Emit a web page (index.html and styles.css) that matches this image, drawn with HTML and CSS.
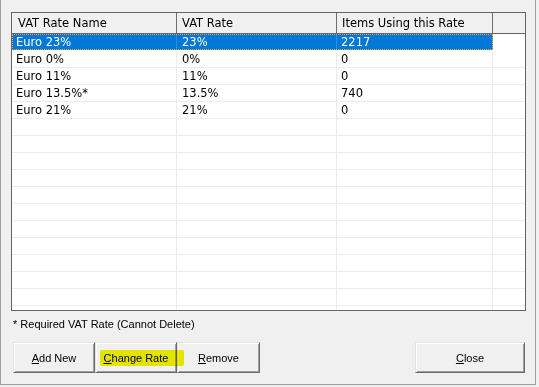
FILE: index.html
```html
<!DOCTYPE html>
<html lang="en">
<head>
    <meta charset="UTF-8">
    <title>VAT Rates</title>
    <link rel="stylesheet" href="styles.css">
</head>
<body>
    <div class="dialog">
        <div class="grid">
            <div class="grid-head">
                <div class="hcell c1">VAT Rate Name</div>
                <div class="hcell c2">VAT Rate</div>
                <div class="hcell c3">Items Using this Rate</div>
                <div class="hcell c4"></div>
            </div>
            <div class="grid-body">
                <div class="row sel">
                    <div class="cells">
                        <div class="cell c1">Euro 23%</div>
                        <div class="cell c2">23%</div>
                        <div class="cell c3">2217</div>
                    </div>
                    <div class="cell c4"></div>
                </div>
                <div class="row">
                    <div class="cells">
                        <div class="cell c1">Euro 0%</div>
                        <div class="cell c2">0%</div>
                        <div class="cell c3">0</div>
                    </div>
                    <div class="cell c4"></div>
                </div>
                <div class="row">
                    <div class="cells">
                        <div class="cell c1">Euro 11%</div>
                        <div class="cell c2">11%</div>
                        <div class="cell c3">0</div>
                    </div>
                    <div class="cell c4"></div>
                </div>
                <div class="row">
                    <div class="cells">
                        <div class="cell c1">Euro 13.5%*</div>
                        <div class="cell c2">13.5%</div>
                        <div class="cell c3">740</div>
                    </div>
                    <div class="cell c4"></div>
                </div>
                <div class="row">
                    <div class="cells">
                        <div class="cell c1">Euro 21%</div>
                        <div class="cell c2">21%</div>
                        <div class="cell c3">0</div>
                    </div>
                    <div class="cell c4"></div>
                </div>
                <div class="row"><div class="cells"><div class="cell c1"></div><div class="cell c2"></div><div class="cell c3"></div></div><div class="cell c4"></div></div>
                <div class="row"><div class="cells"><div class="cell c1"></div><div class="cell c2"></div><div class="cell c3"></div></div><div class="cell c4"></div></div>
                <div class="row"><div class="cells"><div class="cell c1"></div><div class="cell c2"></div><div class="cell c3"></div></div><div class="cell c4"></div></div>
                <div class="row"><div class="cells"><div class="cell c1"></div><div class="cell c2"></div><div class="cell c3"></div></div><div class="cell c4"></div></div>
                <div class="row"><div class="cells"><div class="cell c1"></div><div class="cell c2"></div><div class="cell c3"></div></div><div class="cell c4"></div></div>
                <div class="row"><div class="cells"><div class="cell c1"></div><div class="cell c2"></div><div class="cell c3"></div></div><div class="cell c4"></div></div>
                <div class="row"><div class="cells"><div class="cell c1"></div><div class="cell c2"></div><div class="cell c3"></div></div><div class="cell c4"></div></div>
                <div class="row"><div class="cells"><div class="cell c1"></div><div class="cell c2"></div><div class="cell c3"></div></div><div class="cell c4"></div></div>
                <div class="row"><div class="cells"><div class="cell c1"></div><div class="cell c2"></div><div class="cell c3"></div></div><div class="cell c4"></div></div>
                <div class="row"><div class="cells"><div class="cell c1"></div><div class="cell c2"></div><div class="cell c3"></div></div><div class="cell c4"></div></div>
                <div class="row"><div class="cells"><div class="cell c1"></div><div class="cell c2"></div><div class="cell c3"></div></div><div class="cell c4"></div></div>
                <div class="row"><div class="cells"><div class="cell c1"></div><div class="cell c2"></div><div class="cell c3"></div></div><div class="cell c4"></div></div>
            </div>
        </div>

        <p class="note">* Required VAT Rate (Cannot Delete)</p>

        <div class="buttons">
            <button class="btn btn-add"><u>A</u>dd New</button>
            <button class="btn btn-change"><span class="marker"></span><u>C</u>hange Rate</button>
            <button class="btn btn-remove"><u>R</u>emove</button>
            <button class="btn btn-close"><u>C</u>lose</button>
        </div>
    </div>
</body>
</html>
```

FILE: styles.css
```css
body {
    margin: 0;
    background-color: #f0f0f0;
    font-family: "DejaVu Sans", sans-serif;
    color: #000;
}

.dialog {
    width: 536px;
    height: 385px;
    box-sizing: border-box;
    padding: 12px 0 0 10px;
    border-left: 1px solid #a0a0a0;
    border-right: 1px solid #a0a0a0;
    border-bottom: 1px solid #a0a0a0;
}

/* data grid */
.grid {
    width: 515px;
    height: 299px;
    box-sizing: border-box;
    border: 1px solid #646464;
    background-color: #fff;
    overflow: hidden;
}

.grid-head {
    display: flex;
    height: 21px;
    box-sizing: border-box;
    border-bottom: 1px solid #646464;
    background-color: #f0f0f0;
}

.hcell {
    box-sizing: border-box;
    padding-left: 6px;
    font-size: 11.5px;
    line-height: 20px;
    white-space: nowrap;
    overflow: hidden;
    border-right: 1px solid #6e6e6e;
}

.hcell.c2, .hcell.c3 {
    padding-left: 5px;
}

.hcell.c4 {
    border-right: none;
}

.c1 { width: 165px; }
.c2 { width: 160px; }
.c3 { width: 156px; }
.c4 { width: 32px; }

.grid-body {
    height: 276px;
    overflow: hidden;
}

.row {
    display: flex;
    height: 17px;
    box-sizing: border-box;
    border-bottom: 1px solid #ebebeb;
}

.cells {
    display: flex;
}

.cell {
    box-sizing: border-box;
    padding-left: 4px;
    font-size: 11.5px;
    line-height: 16px;
    white-space: nowrap;
    overflow: hidden;
    border-right: 1px solid #ebebeb;
}

.cell.c2 {
    padding-left: 5px;
}

.cell.c4 {
    border-right: none;
}

.row.sel {
    border-bottom-color: #fff;
}

.row.sel .cells {
    background-color: #0078d7;
    color: #fff;
    outline: 1px dotted #f0a040;
    outline-offset: -1px;
}

.row.sel .cells .cell {
    border-right-color: #2b8ee0;
}

/* footer */
.note {
    margin: 6px 0 0 2px;
    font-family: "Liberation Sans", Arial, sans-serif;
    font-size: 11px;
    line-height: 14px;
}

.buttons {
    display: flex;
    width: 515px;
    box-sizing: border-box;
    padding: 0 1px 0 2px;
    margin-top: 11px;
}

.btn {
    height: 31px;
    box-sizing: border-box;
    padding: 0;
    font-family: "Liberation Sans", Arial, sans-serif;
    font-size: 11px;
    color: #000;
    background-color: #f0f0f0;
    border: 1px solid;
    border-color: #e3e3e3 #696969 #696969 #e3e3e3;
    box-shadow: inset 1px 1px #fff, inset -1px -1px #a0a0a0;
}

.btn-add { width: 82px; }
.btn-change { width: 82px; position: relative; }
.btn-remove { width: 83px; }
.btn-close { width: 110px; margin-left: auto; }

.btn-change .marker {
    position: absolute;
    left: 4px;
    top: 7px;
    width: 84px;
    height: 16px;
    background-color: #f2f200;
    border-radius: 2px;
    mix-blend-mode: multiply;
    z-index: 2;
}
```
